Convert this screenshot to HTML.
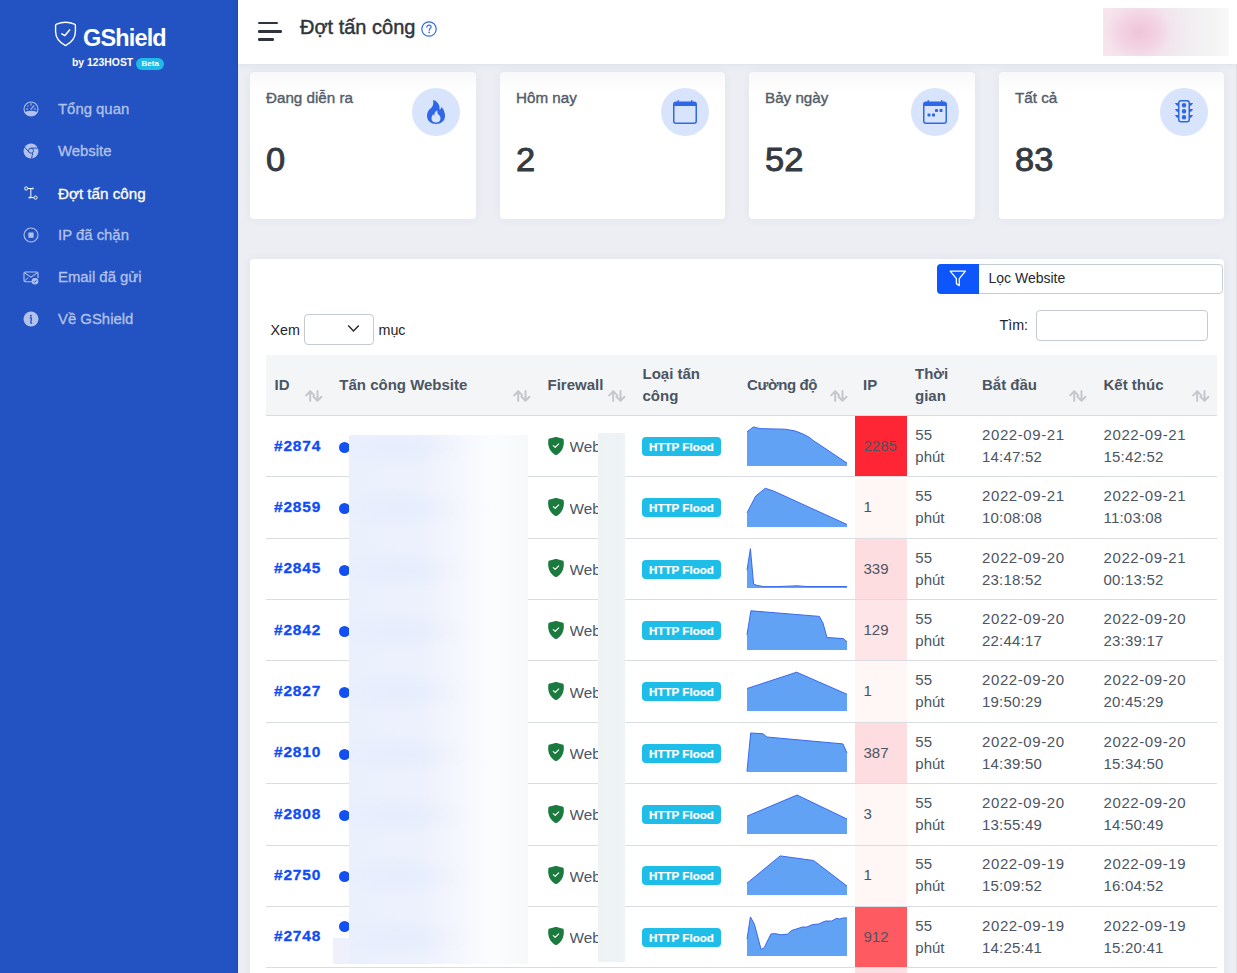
<!DOCTYPE html>
<html><head><meta charset="utf-8"><title>GShield</title>
<style>
html,body{margin:0;padding:0}
body{width:1237px;height:973px;overflow:hidden;position:relative;background:#eceef4;font-family:"Liberation Sans", sans-serif;}
.t{position:absolute;white-space:nowrap;}
#sb{position:absolute;left:0;top:0;width:238px;height:973px;background:#2352c2;box-shadow:inset -1px 0 0 #1a49bd;}
#hd{position:absolute;left:238px;top:0;width:999px;height:64px;background:#fff;box-shadow:0 1px 6px rgba(40,50,80,0.07);z-index:2}
.card{position:absolute;background:#fff;border-radius:4px;box-shadow:0 0 10px rgba(60,70,110,0.06);}
.circ{position:absolute;width:48px;height:48px;border-radius:50%;background:#d8e4fb;}
.badge{position:absolute;width:79px;height:19px;border-radius:4px;background:#1fbee9;color:#fff;font-weight:700;font-size:11.6px;line-height:20.6px;text-align:center;letter-spacing:0px;-webkit-text-stroke:0.2px #fff;}
</style></head><body>
<div id="sb">
<svg style="position:absolute;left:54px;top:21px" width="23" height="26" viewBox="0 0 23 26">
<path d="M11.5 1.3 C8.2 1.3 5 2.1 2.6 3.1 C1.9 3.4 1.6 3.9 1.6 4.6 V10.6 C1.6 16.6 5.6 21.6 11.5 24.6 C17.4 21.6 21.4 16.6 21.4 10.6 V4.6 C21.4 3.9 21.1 3.4 20.4 3.1 C18 2.1 14.8 1.3 11.5 1.3 Z" fill="none" stroke="#fff" stroke-width="1.4" stroke-linejoin="round"/>
<path d="M7.9 12.8 L10.9 14.6 L15.6 8.9" fill="none" stroke="#fff" stroke-width="1.5" stroke-linecap="round" stroke-linejoin="round"/>
</svg>
<div class="t " style="left:83.00px;top:22.58px;font-size:23.5px;line-height:30.55px;color:#fff;font-weight:700;letter-spacing:-0.85px;">GShield</div>
<div class="t " style="left:72.00px;top:55.63px;font-size:10.4px;line-height:13.52px;color:#fff;font-weight:700;">by 123HOST</div>
<div style="position:absolute;left:136px;top:58px;width:28px;height:12px;border-radius:6px;background:#1fbbe6"></div>
<div class="t " style="left:141.50px;top:59.03px;font-size:8px;line-height:10.4px;color:#fff;font-weight:700;">Beta</div>
<div style="position:absolute;left:23.1px;top:101.2px;width:17px;height:16px"><svg width="16" height="16" viewBox="0 0 16 16"><circle cx="8" cy="8" r="7" fill="none" stroke="#b3c2ea" stroke-width="1.1"/><path d="M1.5 11.2 Q8 8.4 14.5 11.2 A7.5 7.5 0 0 1 1.5 11.2 Z" fill="#b3c2ea"/><path d="M8 8.1 L10.9 4.8" stroke="#b3c2ea" stroke-width="1.2" stroke-linecap="round"/><path d="M8 2.6 V4.1 M3.4 8 H4.7 M11.3 8 H12.6" stroke="#b3c2ea" stroke-width="1.1" stroke-linecap="round"/><circle cx="4.9" cy="5" r=".65" fill="#b3c2ea"/></svg></div>
<div class="t " style="left:58.00px;top:100.45px;font-size:14.9px;line-height:19.37px;color:#b3c2ea;-webkit-text-stroke:0.3px #b3c2ea;">Tổng quan</div>
<div style="position:absolute;left:23.1px;top:143.2px;width:17px;height:16px"><svg width="16" height="16" viewBox="0 0 16 16"><circle cx="8" cy="8" r="7.5" fill="#b3c2ea"/><circle cx="8" cy="7.7" r="2.5" fill="none" stroke="#2352c2" stroke-width="1"/><path d="M1 3.6 L5.8 8.8 M8 5.1 L15.6 5.1 M9.6 10 L8.6 15.8" stroke="#2352c2" stroke-width="1"/></svg></div>
<div class="t " style="left:58.00px;top:142.45px;font-size:14.9px;line-height:19.37px;color:#b3c2ea;-webkit-text-stroke:0.3px #b3c2ea;">Website</div>
<div style="position:absolute;left:23.1px;top:185.2px;width:17px;height:16px"><svg width="16" height="16" viewBox="0 0 16 16"><circle cx="3.2" cy="3.5" r="1.6" fill="none" stroke="#fff" stroke-width="1"/><circle cx="12.5" cy="12.6" r="1.6" fill="none" stroke="#fff" stroke-width="1"/><path d="M4.8 3.5 H10.3 M7.85 3.5 V12.6 M5.9 12.6 H10.9" fill="none" stroke="#fff" stroke-width="1"/><rect x="9" y="2.7" width="1.5" height="1.6" fill="#fff"/><rect x="5.7" y="11.8" width="1.5" height="1.6" fill="#fff"/></svg></div>
<div class="t " style="left:58.00px;top:184.15px;font-size:15.2px;line-height:19.76px;color:#ffffff;-webkit-text-stroke:0.3px #ffffff;">Đợt tấn công</div>
<div style="position:absolute;left:23.1px;top:227.2px;width:17px;height:16px"><svg width="16" height="16" viewBox="0 0 16 16"><circle cx="8" cy="8" r="7" fill="none" stroke="#b3c2ea" stroke-width="1.1"/><rect x="5.4" y="5.6" width="5.2" height="5.2" rx=".5" fill="#b3c2ea"/></svg></div>
<div class="t " style="left:58.00px;top:226.45px;font-size:14.9px;line-height:19.37px;color:#b3c2ea;-webkit-text-stroke:0.3px #b3c2ea;">IP đã chặn</div>
<div style="position:absolute;left:23.1px;top:269.2px;width:17px;height:16px"><svg width="16" height="16" viewBox="0 0 16 16"><path d="M15 9.2 V4.2 C15 3.5 14.5 3 13.8 3 H2.2 C1.5 3 1 3.5 1 4.2 V11.6 C1 12.3 1.5 12.8 2.2 12.8 H9.6" fill="none" stroke="#b3c2ea" stroke-width="1.1"/><path d="M1.4 3.6 L7.9 8.2 L14.6 3.6" fill="none" stroke="#b3c2ea" stroke-width="1.1"/><path d="M1.4 12 L5.2 8.6" fill="none" stroke="#b3c2ea" stroke-width="1"/><circle cx="12" cy="12.3" r="3.3" fill="#b3c2ea"/><path d="M10.6 12.4 L11.6 13.3 L13.4 11.4" fill="none" stroke="#2352c2" stroke-width="1"/></svg></div>
<div class="t " style="left:58.00px;top:268.45px;font-size:14.9px;line-height:19.37px;color:#b3c2ea;-webkit-text-stroke:0.3px #b3c2ea;">Email đã gửi</div>
<div style="position:absolute;left:23.1px;top:310.7px;width:17px;height:16px"><svg width="16" height="16" viewBox="0 0 16 16"><circle cx="8" cy="8" r="7.5" fill="#b3c2ea"/><circle cx="7.9" cy="4.8" r=".95" fill="#2352c2"/><path d="M7.2 6.9 H8.5 L7.8 11.4 C7.7 12 8 12.3 8.7 12.2" fill="none" stroke="#2352c2" stroke-width="1.3" stroke-linecap="round" stroke-linejoin="round"/></svg></div>
<div class="t " style="left:58.00px;top:310.45px;font-size:14.9px;line-height:19.37px;color:#b3c2ea;-webkit-text-stroke:0.3px #b3c2ea;">Về GShield</div>
</div>
<div id="hd">
<div style="position:absolute;left:20px;top:21.8px;width:20px;height:2.6px;border-radius:1.3px;background:#2e343c"></div>
<div style="position:absolute;left:20px;top:30.4px;width:24px;height:2.6px;border-radius:1.3px;background:#2e343c"></div>
<div style="position:absolute;left:20px;top:38.4px;width:16px;height:2.6px;border-radius:1.3px;background:#2e343c"></div>
<div class="t " style="left:62.00px;top:13.87px;font-size:20px;line-height:26.0px;color:#2f353d;-webkit-text-stroke:0.45px #2f353d;">Đợt tấn công</div>
<svg style="position:absolute;left:182.5px;top:20.5px" width="16" height="16" viewBox="0 0 16 16"><circle cx="8" cy="8" r="7.2" fill="none" stroke="#2f6ae8" stroke-width="1.2"/><path d="M5.9 6.1 C5.9 4.9 6.8 4.1 8 4.1 C9.2 4.1 10.1 4.9 10.1 6 C10.1 7.4 8.2 7.6 8.2 9.2" fill="none" stroke="#2f6ae8" stroke-width="1.2" stroke-linecap="round"/><circle cx="8.2" cy="11.4" r=".8" fill="#2f6ae8"/></svg>
<div style="position:absolute;left:865px;top:8px;width:126px;height:48px;background:radial-gradient(ellipse 52px 44px at 36px 24px,rgba(240,196,218,1) 0%,rgba(242,205,224,0.9) 30%,rgba(243,225,235,0.5) 65%,rgba(243,240,243,0) 100%),linear-gradient(90deg,#f9e6ef 0%,#f2e4ec 40%,#f1eef1 65%,#f3f3f4 85%,#f9f9fa 100%)"></div>
</div>
<div class="card" style="left:250px;top:72px;width:226px;height:147px;background:linear-gradient(#f9f9fb 0px,#fcfcfd 10px,#fff 22px)"></div>
<div class="t " style="left:266.00px;top:88.05px;font-size:15.2px;line-height:19.76px;color:#555e69;-webkit-text-stroke:0.4px #555e69;">Đang diễn ra</div>
<div class="circ" style="left:412.0px;top:88px"></div>
<div style="position:absolute;left:424.0px;top:100px;width:24px;height:24px"><svg width="24" height="24" viewBox="0 0 16 16"><path d="M8 16c3.314 0 6-2 6-5.5 0-1.5-.5-4-2.5-6 .25 1.5-1.25 2-1.25 2C11 4 9 .5 6 0c.357 2 .5 4-2 6-1.25 1-2 2.729-2 4.5C2 14 4.686 16 8 16m0-1c-1.657 0-3-1-3-2.75 0-.75.25-2 1.25-3C6.125 10 7 10.5 7 10.5c-.375-1.25.5-3.25 2-3.5-.179 1-.25 2 1 3 .625.5 1 1.364 1 2.25C11 14 9.657 15 8 15" fill="#2f67e6"/></svg></div>
<div class="t " style="left:266.00px;top:138.91px;font-size:32.5px;line-height:42.25px;color:#343a42;-webkit-text-stroke:0.9px #343a42;transform:scaleX(1.06);transform-origin:0 0;">0</div>
<div class="card" style="left:500px;top:72px;width:225px;height:147px;background:linear-gradient(#f9f9fb 0px,#fcfcfd 10px,#fff 22px)"></div>
<div class="t " style="left:516.00px;top:88.05px;font-size:15.2px;line-height:19.76px;color:#555e69;-webkit-text-stroke:0.4px #555e69;">Hôm nay</div>
<div class="circ" style="left:661.0px;top:88px"></div>
<div style="position:absolute;left:673.0px;top:100px;width:24px;height:24px"><svg width="24" height="24" viewBox="0 0 16 16"><path d="M3.5 0a.5.5 0 0 1 .5.5V1h8V.5a.5.5 0 0 1 1 0V1h1a2 2 0 0 1 2 2v11a2 2 0 0 1-2 2H2a2 2 0 0 1-2-2V3a2 2 0 0 1 2-2h1V.5a.5.5 0 0 1 .5-.5M1 4v10a1 1 0 0 0 1 1h12a1 1 0 0 0 1-1V4z" fill="#2f67e6"/></svg></div>
<div class="t " style="left:516.00px;top:138.91px;font-size:32.5px;line-height:42.25px;color:#343a42;-webkit-text-stroke:0.9px #343a42;transform:scaleX(1.06);transform-origin:0 0;">2</div>
<div class="card" style="left:749px;top:72px;width:226px;height:147px;background:linear-gradient(#f9f9fb 0px,#fcfcfd 10px,#fff 22px)"></div>
<div class="t " style="left:765.00px;top:88.05px;font-size:15.2px;line-height:19.76px;color:#555e69;-webkit-text-stroke:0.4px #555e69;">Bảy ngày</div>
<div class="circ" style="left:911.0px;top:88px"></div>
<div style="position:absolute;left:923.0px;top:100px;width:24px;height:24px"><svg width="24" height="24" viewBox="0 0 16 16"><path d="M3.5 0a.5.5 0 0 1 .5.5V1h8V.5a.5.5 0 0 1 1 0V1h1a2 2 0 0 1 2 2v11a2 2 0 0 1-2 2H2a2 2 0 0 1-2-2V3a2 2 0 0 1 2-2h1V.5a.5.5 0 0 1 .5-.5M1 4v10a1 1 0 0 0 1 1h12a1 1 0 0 0 1-1V4z" fill="#2f67e6"/><path d="M11 6.5a.5.5 0 0 1 .5-.5h1a.5.5 0 0 1 .5.5v1a.5.5 0 0 1-.5.5h-1a.5.5 0 0 1-.5-.5zm-3 0a.5.5 0 0 1 .5-.5h1a.5.5 0 0 1 .5.5v1a.5.5 0 0 1-.5.5h-1a.5.5 0 0 1-.5-.5zm-5 3a.5.5 0 0 1 .5-.5h1a.5.5 0 0 1 .5.5v1a.5.5 0 0 1-.5.5h-1a.5.5 0 0 1-.5-.5zm3 0a.5.5 0 0 1 .5-.5h1a.5.5 0 0 1 .5.5v1a.5.5 0 0 1-.5.5h-1a.5.5 0 0 1-.5-.5z" fill="#2f67e6"/></svg></div>
<div class="t " style="left:765.00px;top:138.91px;font-size:32.5px;line-height:42.25px;color:#343a42;-webkit-text-stroke:0.9px #343a42;transform:scaleX(1.06);transform-origin:0 0;">52</div>
<div class="card" style="left:999px;top:72px;width:225px;height:147px;background:linear-gradient(#f9f9fb 0px,#fcfcfd 10px,#fff 22px)"></div>
<div class="t " style="left:1015.00px;top:88.05px;font-size:15.2px;line-height:19.76px;color:#555e69;-webkit-text-stroke:0.4px #555e69;">Tất cả</div>
<div class="circ" style="left:1160.0px;top:88px"></div>
<div style="position:absolute;left:1172.0px;top:100px;width:24px;height:24px"><svg width="24" height="24" viewBox="0 0 16 16"><path d="M8 5a1.5 1.5 0 1 0 0-3 1.5 1.5 0 0 0 0 3m0 4a1.5 1.5 0 1 0 0-3 1.5 1.5 0 0 0 0 3m1.5 2.5a1.5 1.5 0 1 1-3 0 1.5 1.5 0 0 1 3 0" fill="#2f67e6"/><path d="M4 2a2 2 0 0 1 2-2h4a2 2 0 0 1 2 2h2c-.167.5-.8 1.6-2 2v2h2c-.167.5-.8 1.6-2 2v2h2c-.167.5-.8 1.6-2 2v1a2 2 0 0 1-2 2H6a2 2 0 0 1-2-2v-1c-1.2-.4-1.833-1.5-2-2h2V8c-1.2-.4-1.833-1.5-2-2h2V4c-1.2-.4-1.833-1.5-2-2zm2-1a1 1 0 0 0-1 1v11a1 1 0 0 0 1 1h4a1 1 0 0 0 1-1V2a1 1 0 0 0-1-1z" fill="#2f67e6"/></svg></div>
<div class="t " style="left:1015.00px;top:138.91px;font-size:32.5px;line-height:42.25px;color:#343a42;-webkit-text-stroke:0.9px #343a42;transform:scaleX(1.06);transform-origin:0 0;">83</div>
<div class="card" style="left:250px;top:259px;width:974px;height:760px"></div>
<div style="position:absolute;left:936.5px;top:263.5px;width:286.5px;height:30px;border:1px solid #c6ccd4;border-radius:4px;background:#fff;box-sizing:border-box"></div>
<div style="position:absolute;left:936.5px;top:263.5px;width:42.5px;height:30px;border-radius:4px 0 0 4px;background:#0d55fd"></div>
<svg style="position:absolute;left:949px;top:270px" width="18" height="17" viewBox="0 0 18 17"><path d="M1.2 1.2 H16.4 L10.3 8.6 V15.6 L7.4 13.6 V8.6 Z" fill="none" stroke="#fff" stroke-width="1.3" stroke-linejoin="round"/></svg>
<div class="t " style="left:988.50px;top:268.85px;font-size:14px;line-height:18.2px;color:#24292f;">Lọc Website</div>
<div class="t " style="left:270.50px;top:320.95px;font-size:14.3px;line-height:18.59px;color:#1f2328;">Xem</div>
<div style="position:absolute;left:304px;top:314px;width:70px;height:31px;border:1px solid #c4cbd4;border-radius:4px;box-sizing:border-box;background:#fff"></div>
<svg style="position:absolute;left:346.5px;top:324.4px" width="13" height="9" viewBox="0 0 13 9"><path d="M1.2 1.5 L6.5 6.9 L11.8 1.5" fill="none" stroke="#24292f" stroke-width="1.4"/></svg>
<div class="t " style="left:378.50px;top:320.95px;font-size:14.3px;line-height:18.59px;color:#1f2328;">mục</div>
<div class="t " style="left:999.50px;top:316.45px;font-size:14.3px;line-height:18.59px;color:#1f2328;">Tìm:</div>
<div style="position:absolute;left:1036px;top:310px;width:172px;height:31px;border:1px solid #c4cbd4;border-radius:4px;box-sizing:border-box;background:#fff"></div>
<div style="position:absolute;left:266px;top:355px;width:951px;height:60px;background:#f4f5f7"></div>
<div style="position:absolute;left:266px;top:415px;width:951px;height:1px;background:#d9dde2"></div>
<div style="position:absolute;left:266px;top:476px;width:951px;height:1px;background:#d9dde2"></div>
<div style="position:absolute;left:266px;top:538px;width:951px;height:1px;background:#d9dde2"></div>
<div style="position:absolute;left:266px;top:599px;width:951px;height:1px;background:#d9dde2"></div>
<div style="position:absolute;left:266px;top:660px;width:951px;height:1px;background:#d9dde2"></div>
<div style="position:absolute;left:266px;top:722px;width:951px;height:1px;background:#d9dde2"></div>
<div style="position:absolute;left:266px;top:783px;width:951px;height:1px;background:#d9dde2"></div>
<div style="position:absolute;left:266px;top:845px;width:951px;height:1px;background:#d9dde2"></div>
<div style="position:absolute;left:266px;top:906px;width:951px;height:1px;background:#d9dde2"></div>
<div style="position:absolute;left:266px;top:967px;width:951px;height:1px;background:#d9dde2"></div>
<div class="t " style="left:274.50px;top:375.05px;font-size:15px;line-height:19.5px;color:#4b5563;font-weight:700;">ID</div>
<svg style="position:absolute;left:305px;top:389.5px" width="18" height="12" viewBox="0 0 18 12"><path d="M5.2 10.9 V1.3 M1.2 5.4 L5.2 1.2 L9.2 5.4 M12.5 1.1 V10.7 M8.5 6.7 L12.5 10.8 L16.5 6.7" fill="none" stroke="#c4c8cc" stroke-width="2" stroke-linecap="round" stroke-linejoin="round"/></svg>
<div class="t " style="left:339.30px;top:375.05px;font-size:15px;line-height:19.5px;color:#4b5563;font-weight:700;">Tấn công Website</div>
<svg style="position:absolute;left:513px;top:389.5px" width="18" height="12" viewBox="0 0 18 12"><path d="M5.2 10.9 V1.3 M1.2 5.4 L5.2 1.2 L9.2 5.4 M12.5 1.1 V10.7 M8.5 6.7 L12.5 10.8 L16.5 6.7" fill="none" stroke="#c4c8cc" stroke-width="2" stroke-linecap="round" stroke-linejoin="round"/></svg>
<div class="t " style="left:547.50px;top:375.05px;font-size:15px;line-height:19.5px;color:#4b5563;font-weight:700;">Firewall</div>
<svg style="position:absolute;left:608px;top:389.5px" width="18" height="12" viewBox="0 0 18 12"><path d="M5.2 10.9 V1.3 M1.2 5.4 L5.2 1.2 L9.2 5.4 M12.5 1.1 V10.7 M8.5 6.7 L12.5 10.8 L16.5 6.7" fill="none" stroke="#c4c8cc" stroke-width="2" stroke-linecap="round" stroke-linejoin="round"/></svg>
<div class="t " style="left:642.50px;top:364.25px;font-size:15px;line-height:19.5px;color:#4b5563;font-weight:700;">Loại tấn</div>
<div class="t " style="left:642.50px;top:386.25px;font-size:15px;line-height:19.5px;color:#4b5563;font-weight:700;">công</div>
<div class="t " style="left:747.00px;top:375.05px;font-size:15px;line-height:19.5px;color:#4b5563;font-weight:700;letter-spacing:-0.4px;">Cường độ</div>
<svg style="position:absolute;left:829.5px;top:389.5px" width="18" height="12" viewBox="0 0 18 12"><path d="M5.2 10.9 V1.3 M1.2 5.4 L5.2 1.2 L9.2 5.4 M12.5 1.1 V10.7 M8.5 6.7 L12.5 10.8 L16.5 6.7" fill="none" stroke="#c4c8cc" stroke-width="2" stroke-linecap="round" stroke-linejoin="round"/></svg>
<div class="t " style="left:863.00px;top:375.05px;font-size:15px;line-height:19.5px;color:#4b5563;font-weight:700;">IP</div>
<div class="t " style="left:915.00px;top:364.25px;font-size:15px;line-height:19.5px;color:#4b5563;font-weight:700;">Thời</div>
<div class="t " style="left:915.00px;top:386.25px;font-size:15px;line-height:19.5px;color:#4b5563;font-weight:700;">gian</div>
<div class="t " style="left:982.00px;top:375.05px;font-size:15px;line-height:19.5px;color:#4b5563;font-weight:700;">Bắt đầu</div>
<svg style="position:absolute;left:1069px;top:389.5px" width="18" height="12" viewBox="0 0 18 12"><path d="M5.2 10.9 V1.3 M1.2 5.4 L5.2 1.2 L9.2 5.4 M12.5 1.1 V10.7 M8.5 6.7 L12.5 10.8 L16.5 6.7" fill="none" stroke="#c4c8cc" stroke-width="2" stroke-linecap="round" stroke-linejoin="round"/></svg>
<div class="t " style="left:1103.50px;top:375.05px;font-size:15px;line-height:19.5px;color:#4b5563;font-weight:700;">Kết thúc</div>
<svg style="position:absolute;left:1191.5px;top:389.5px" width="18" height="12" viewBox="0 0 18 12"><path d="M5.2 10.9 V1.3 M1.2 5.4 L5.2 1.2 L9.2 5.4 M12.5 1.1 V10.7 M8.5 6.7 L12.5 10.8 L16.5 6.7" fill="none" stroke="#c4c8cc" stroke-width="2" stroke-linecap="round" stroke-linejoin="round"/></svg>
<div style="position:absolute;left:855px;top:416px;width:52px;height:60px;background:#fe2634"></div>
<div class="t " style="left:274.00px;top:435.55px;font-size:15.5px;line-height:20.15px;color:#0f4cf6;font-weight:700;letter-spacing:0.8px;-webkit-text-stroke:0.3px #0f4cf6;">#2874</div>
<div style="position:absolute;left:338.5px;top:441.9px;width:11px;height:11px;border-radius:50%;background:#1250f2"></div>
<svg style="position:absolute;left:547.2px;top:436.80px" width="18" height="18" viewBox="0 0 16 16"><path d="M8 0c-.69 0-1.843.265-2.928.56-1.11.3-2.229.655-2.887.87a1.54 1.54 0 0 0-1.044 1.262c-.596 4.477.787 7.795 2.465 9.99a11.8 11.8 0 0 0 2.517 2.453c.386.273.744.482 1.048.625.28.132.581.24.829.24s.548-.108.829-.24a7 7 0 0 0 1.048-.625 11.8 11.8 0 0 0 2.517-2.453c1.678-2.195 3.061-5.513 2.465-9.990a1.54 1.54 0 0 0-1.044-1.263 63 63 0 0 0-2.887-.87C9.843.266 8.69 0 8 0" fill="#1b7a3e"/><path d="M5.6 7.6 L7.3 9.2 L10.4 6.1" fill="none" stroke="#fff" stroke-width="1" stroke-linecap="round" stroke-linejoin="round"/></svg>
<div class="t " style="left:569.50px;top:437.25px;font-size:15.3px;line-height:19.89px;color:#4b5563;clip-path:inset(0 0 0 0);width:28.5px;overflow:hidden;white-space:nowrap;">Web</div>
<div class="badge" style="left:642px;top:437.10px">HTTP Flood</div>
<svg style="position:absolute;left:747px;top:425.70px;overflow:visible" width="100" height="40" viewBox="0 0 100 40"><polygon points="0,40 0,5.9 6.4,0.9 12.8,2.6 25,2.9 37.7,3.2 44,4.2 48.4,5.1 53,6.8 57.2,8.6 62,11.2 66.1,14.4 100,37.1 100,40" fill="#62a2f5"/><polyline points="0,5.9 6.4,0.9 12.8,2.6 25,2.9 37.7,3.2 44,4.2 48.4,5.1 53,6.8 57.2,8.6 62,11.2 66.1,14.4 100,37.1" fill="none" stroke="#3a68ee" stroke-width="1" stroke-linejoin="round"/></svg>
<div class="t " style="left:863.50px;top:436.05px;font-size:15px;line-height:19.5px;color:#4b5563;">2285</div>
<div class="t " style="left:915.30px;top:424.95px;font-size:15px;line-height:19.5px;color:#4b5563;">55</div>
<div class="t " style="left:915.30px;top:447.05px;font-size:15px;line-height:19.5px;color:#4b5563;">phút</div>
<div class="t " style="left:982.00px;top:424.95px;font-size:15px;line-height:19.5px;color:#4b5563;letter-spacing:0.6px;">2022-09-21</div>
<div class="t " style="left:982.00px;top:447.05px;font-size:15px;line-height:19.5px;color:#4b5563;letter-spacing:0.2px;">14:47:52</div>
<div class="t " style="left:1103.50px;top:424.95px;font-size:15px;line-height:19.5px;color:#4b5563;letter-spacing:0.6px;">2022-09-21</div>
<div class="t " style="left:1103.50px;top:447.05px;font-size:15px;line-height:19.5px;color:#4b5563;letter-spacing:0.2px;">15:42:52</div>
<div style="position:absolute;left:855px;top:477px;width:52px;height:61px;background:#fff6f6"></div>
<div class="t " style="left:274.00px;top:496.88px;font-size:15.5px;line-height:20.15px;color:#0f4cf6;font-weight:700;letter-spacing:0.8px;-webkit-text-stroke:0.3px #0f4cf6;">#2859</div>
<div style="position:absolute;left:338.5px;top:503.2px;width:11px;height:11px;border-radius:50%;background:#1250f2"></div>
<svg style="position:absolute;left:547.2px;top:498.13px" width="18" height="18" viewBox="0 0 16 16"><path d="M8 0c-.69 0-1.843.265-2.928.56-1.11.3-2.229.655-2.887.87a1.54 1.54 0 0 0-1.044 1.262c-.596 4.477.787 7.795 2.465 9.99a11.8 11.8 0 0 0 2.517 2.453c.386.273.744.482 1.048.625.28.132.581.24.829.24s.548-.108.829-.24a7 7 0 0 0 1.048-.625 11.8 11.8 0 0 0 2.517-2.453c1.678-2.195 3.061-5.513 2.465-9.990a1.54 1.54 0 0 0-1.044-1.263 63 63 0 0 0-2.887-.87C9.843.266 8.69 0 8 0" fill="#1b7a3e"/><path d="M5.6 7.6 L7.3 9.2 L10.4 6.1" fill="none" stroke="#fff" stroke-width="1" stroke-linecap="round" stroke-linejoin="round"/></svg>
<div class="t " style="left:569.50px;top:498.58px;font-size:15.3px;line-height:19.89px;color:#4b5563;clip-path:inset(0 0 0 0);width:28.5px;overflow:hidden;white-space:nowrap;">Web</div>
<div class="badge" style="left:642px;top:498.43px">HTTP Flood</div>
<svg style="position:absolute;left:747px;top:487.03px;overflow:visible" width="100" height="40" viewBox="0 0 100 40"><polygon points="0,40 0,25.8 8.8,8.9 18.3,1.3 26.6,4 100,37.5 100,40" fill="#62a2f5"/><polyline points="0,25.8 8.8,8.9 18.3,1.3 26.6,4 100,37.5" fill="none" stroke="#3a68ee" stroke-width="1" stroke-linejoin="round"/></svg>
<div class="t " style="left:863.50px;top:497.38px;font-size:15px;line-height:19.5px;color:#4b5563;">1</div>
<div class="t " style="left:915.30px;top:486.28px;font-size:15px;line-height:19.5px;color:#4b5563;">55</div>
<div class="t " style="left:915.30px;top:508.38px;font-size:15px;line-height:19.5px;color:#4b5563;">phút</div>
<div class="t " style="left:982.00px;top:486.28px;font-size:15px;line-height:19.5px;color:#4b5563;letter-spacing:0.6px;">2022-09-21</div>
<div class="t " style="left:982.00px;top:508.38px;font-size:15px;line-height:19.5px;color:#4b5563;letter-spacing:0.2px;">10:08:08</div>
<div class="t " style="left:1103.50px;top:486.28px;font-size:15px;line-height:19.5px;color:#4b5563;letter-spacing:0.6px;">2022-09-21</div>
<div class="t " style="left:1103.50px;top:508.38px;font-size:15px;line-height:19.5px;color:#4b5563;letter-spacing:0.2px;">11:03:08</div>
<div style="position:absolute;left:855px;top:539px;width:52px;height:60px;background:#fddde0"></div>
<div class="t " style="left:274.00px;top:558.21px;font-size:15.5px;line-height:20.15px;color:#0f4cf6;font-weight:700;letter-spacing:0.8px;-webkit-text-stroke:0.3px #0f4cf6;">#2845</div>
<div style="position:absolute;left:338.5px;top:564.6px;width:11px;height:11px;border-radius:50%;background:#1250f2"></div>
<svg style="position:absolute;left:547.2px;top:559.46px" width="18" height="18" viewBox="0 0 16 16"><path d="M8 0c-.69 0-1.843.265-2.928.56-1.11.3-2.229.655-2.887.87a1.54 1.54 0 0 0-1.044 1.262c-.596 4.477.787 7.795 2.465 9.99a11.8 11.8 0 0 0 2.517 2.453c.386.273.744.482 1.048.625.28.132.581.24.829.24s.548-.108.829-.24a7 7 0 0 0 1.048-.625 11.8 11.8 0 0 0 2.517-2.453c1.678-2.195 3.061-5.513 2.465-9.990a1.54 1.54 0 0 0-1.044-1.263 63 63 0 0 0-2.887-.87C9.843.266 8.69 0 8 0" fill="#1b7a3e"/><path d="M5.6 7.6 L7.3 9.2 L10.4 6.1" fill="none" stroke="#fff" stroke-width="1" stroke-linecap="round" stroke-linejoin="round"/></svg>
<div class="t " style="left:569.50px;top:559.91px;font-size:15.3px;line-height:19.89px;color:#4b5563;clip-path:inset(0 0 0 0);width:28.5px;overflow:hidden;white-space:nowrap;">Web</div>
<div class="badge" style="left:642px;top:559.76px">HTTP Flood</div>
<svg style="position:absolute;left:747px;top:548.36px;overflow:visible" width="100" height="40" viewBox="0 0 100 40"><polygon points="0,40 0,22.2 3.4,0.7 6.6,36 10,37.4 17,38.6 30,38.6 40,38.2 50,37.8 60,38.5 100,38.5 100,40" fill="#62a2f5"/><polyline points="0,22.2 3.4,0.7 6.6,36 10,37.4 17,38.6 30,38.6 40,38.2 50,37.8 60,38.5 100,38.5" fill="none" stroke="#3a68ee" stroke-width="1" stroke-linejoin="round"/></svg>
<div class="t " style="left:863.50px;top:558.71px;font-size:15px;line-height:19.5px;color:#4b5563;">339</div>
<div class="t " style="left:915.30px;top:547.61px;font-size:15px;line-height:19.5px;color:#4b5563;">55</div>
<div class="t " style="left:915.30px;top:569.71px;font-size:15px;line-height:19.5px;color:#4b5563;">phút</div>
<div class="t " style="left:982.00px;top:547.61px;font-size:15px;line-height:19.5px;color:#4b5563;letter-spacing:0.6px;">2022-09-20</div>
<div class="t " style="left:982.00px;top:569.71px;font-size:15px;line-height:19.5px;color:#4b5563;letter-spacing:0.2px;">23:18:52</div>
<div class="t " style="left:1103.50px;top:547.61px;font-size:15px;line-height:19.5px;color:#4b5563;letter-spacing:0.6px;">2022-09-21</div>
<div class="t " style="left:1103.50px;top:569.71px;font-size:15px;line-height:19.5px;color:#4b5563;letter-spacing:0.2px;">00:13:52</div>
<div style="position:absolute;left:855px;top:600px;width:52px;height:60px;background:#fee6e8"></div>
<div class="t " style="left:274.00px;top:619.54px;font-size:15.5px;line-height:20.15px;color:#0f4cf6;font-weight:700;letter-spacing:0.8px;-webkit-text-stroke:0.3px #0f4cf6;">#2842</div>
<div style="position:absolute;left:338.5px;top:625.9px;width:11px;height:11px;border-radius:50%;background:#1250f2"></div>
<svg style="position:absolute;left:547.2px;top:620.79px" width="18" height="18" viewBox="0 0 16 16"><path d="M8 0c-.69 0-1.843.265-2.928.56-1.11.3-2.229.655-2.887.87a1.54 1.54 0 0 0-1.044 1.262c-.596 4.477.787 7.795 2.465 9.99a11.8 11.8 0 0 0 2.517 2.453c.386.273.744.482 1.048.625.28.132.581.24.829.24s.548-.108.829-.24a7 7 0 0 0 1.048-.625 11.8 11.8 0 0 0 2.517-2.453c1.678-2.195 3.061-5.513 2.465-9.990a1.54 1.54 0 0 0-1.044-1.263 63 63 0 0 0-2.887-.87C9.843.266 8.69 0 8 0" fill="#1b7a3e"/><path d="M5.6 7.6 L7.3 9.2 L10.4 6.1" fill="none" stroke="#fff" stroke-width="1" stroke-linecap="round" stroke-linejoin="round"/></svg>
<div class="t " style="left:569.50px;top:621.24px;font-size:15.3px;line-height:19.89px;color:#4b5563;clip-path:inset(0 0 0 0);width:28.5px;overflow:hidden;white-space:nowrap;">Web</div>
<div class="badge" style="left:642px;top:621.09px">HTTP Flood</div>
<svg style="position:absolute;left:747px;top:609.69px;overflow:visible" width="100" height="40" viewBox="0 0 100 40"><polygon points="0,40 0,24.8 3.9,0.8 72.4,6.4 76.1,13.3 79.9,27.5 96.4,28.6 100,32 100,40" fill="#62a2f5"/><polyline points="0,24.8 3.9,0.8 72.4,6.4 76.1,13.3 79.9,27.5 96.4,28.6 100,32" fill="none" stroke="#3a68ee" stroke-width="1" stroke-linejoin="round"/></svg>
<div class="t " style="left:863.50px;top:620.04px;font-size:15px;line-height:19.5px;color:#4b5563;">129</div>
<div class="t " style="left:915.30px;top:608.94px;font-size:15px;line-height:19.5px;color:#4b5563;">55</div>
<div class="t " style="left:915.30px;top:631.04px;font-size:15px;line-height:19.5px;color:#4b5563;">phút</div>
<div class="t " style="left:982.00px;top:608.94px;font-size:15px;line-height:19.5px;color:#4b5563;letter-spacing:0.6px;">2022-09-20</div>
<div class="t " style="left:982.00px;top:631.04px;font-size:15px;line-height:19.5px;color:#4b5563;letter-spacing:0.2px;">22:44:17</div>
<div class="t " style="left:1103.50px;top:608.94px;font-size:15px;line-height:19.5px;color:#4b5563;letter-spacing:0.6px;">2022-09-20</div>
<div class="t " style="left:1103.50px;top:631.04px;font-size:15px;line-height:19.5px;color:#4b5563;letter-spacing:0.2px;">23:39:17</div>
<div style="position:absolute;left:855px;top:661px;width:52px;height:61px;background:#fff6f6"></div>
<div class="t " style="left:274.00px;top:680.87px;font-size:15.5px;line-height:20.15px;color:#0f4cf6;font-weight:700;letter-spacing:0.8px;-webkit-text-stroke:0.3px #0f4cf6;">#2827</div>
<div style="position:absolute;left:338.5px;top:687.2px;width:11px;height:11px;border-radius:50%;background:#1250f2"></div>
<svg style="position:absolute;left:547.2px;top:682.12px" width="18" height="18" viewBox="0 0 16 16"><path d="M8 0c-.69 0-1.843.265-2.928.56-1.11.3-2.229.655-2.887.87a1.54 1.54 0 0 0-1.044 1.262c-.596 4.477.787 7.795 2.465 9.99a11.8 11.8 0 0 0 2.517 2.453c.386.273.744.482 1.048.625.28.132.581.24.829.24s.548-.108.829-.24a7 7 0 0 0 1.048-.625 11.8 11.8 0 0 0 2.517-2.453c1.678-2.195 3.061-5.513 2.465-9.990a1.54 1.54 0 0 0-1.044-1.263 63 63 0 0 0-2.887-.87C9.843.266 8.69 0 8 0" fill="#1b7a3e"/><path d="M5.6 7.6 L7.3 9.2 L10.4 6.1" fill="none" stroke="#fff" stroke-width="1" stroke-linecap="round" stroke-linejoin="round"/></svg>
<div class="t " style="left:569.50px;top:682.57px;font-size:15.3px;line-height:19.89px;color:#4b5563;clip-path:inset(0 0 0 0);width:28.5px;overflow:hidden;white-space:nowrap;">Web</div>
<div class="badge" style="left:642px;top:682.42px">HTTP Flood</div>
<svg style="position:absolute;left:747px;top:671.02px;overflow:visible" width="100" height="40" viewBox="0 0 100 40"><polygon points="0,40 0,17.5 49.7,1.2 100,23.3 100,40" fill="#62a2f5"/><polyline points="0,17.5 49.7,1.2 100,23.3" fill="none" stroke="#3a68ee" stroke-width="1" stroke-linejoin="round"/></svg>
<div class="t " style="left:863.50px;top:681.37px;font-size:15px;line-height:19.5px;color:#4b5563;">1</div>
<div class="t " style="left:915.30px;top:670.27px;font-size:15px;line-height:19.5px;color:#4b5563;">55</div>
<div class="t " style="left:915.30px;top:692.37px;font-size:15px;line-height:19.5px;color:#4b5563;">phút</div>
<div class="t " style="left:982.00px;top:670.27px;font-size:15px;line-height:19.5px;color:#4b5563;letter-spacing:0.6px;">2022-09-20</div>
<div class="t " style="left:982.00px;top:692.37px;font-size:15px;line-height:19.5px;color:#4b5563;letter-spacing:0.2px;">19:50:29</div>
<div class="t " style="left:1103.50px;top:670.27px;font-size:15px;line-height:19.5px;color:#4b5563;letter-spacing:0.6px;">2022-09-20</div>
<div class="t " style="left:1103.50px;top:692.37px;font-size:15px;line-height:19.5px;color:#4b5563;letter-spacing:0.2px;">20:45:29</div>
<div style="position:absolute;left:855px;top:723px;width:52px;height:60px;background:#fddde0"></div>
<div class="t " style="left:274.00px;top:742.20px;font-size:15.5px;line-height:20.15px;color:#0f4cf6;font-weight:700;letter-spacing:0.8px;-webkit-text-stroke:0.3px #0f4cf6;">#2810</div>
<div style="position:absolute;left:338.5px;top:748.5px;width:11px;height:11px;border-radius:50%;background:#1250f2"></div>
<svg style="position:absolute;left:547.2px;top:743.45px" width="18" height="18" viewBox="0 0 16 16"><path d="M8 0c-.69 0-1.843.265-2.928.56-1.11.3-2.229.655-2.887.87a1.54 1.54 0 0 0-1.044 1.262c-.596 4.477.787 7.795 2.465 9.99a11.8 11.8 0 0 0 2.517 2.453c.386.273.744.482 1.048.625.28.132.581.24.829.24s.548-.108.829-.24a7 7 0 0 0 1.048-.625 11.8 11.8 0 0 0 2.517-2.453c1.678-2.195 3.061-5.513 2.465-9.990a1.54 1.54 0 0 0-1.044-1.263 63 63 0 0 0-2.887-.87C9.843.266 8.69 0 8 0" fill="#1b7a3e"/><path d="M5.6 7.6 L7.3 9.2 L10.4 6.1" fill="none" stroke="#fff" stroke-width="1" stroke-linecap="round" stroke-linejoin="round"/></svg>
<div class="t " style="left:569.50px;top:743.90px;font-size:15.3px;line-height:19.89px;color:#4b5563;clip-path:inset(0 0 0 0);width:28.5px;overflow:hidden;white-space:nowrap;">Web</div>
<div class="badge" style="left:642px;top:743.75px">HTTP Flood</div>
<svg style="position:absolute;left:747px;top:732.35px;overflow:visible" width="100" height="40" viewBox="0 0 100 40"><polygon points="0,40 0,39.3 3.7,1 15.9,1.7 19.9,5 95.9,11.9 100,21 100,40" fill="#62a2f5"/><polyline points="0,39.3 3.7,1 15.9,1.7 19.9,5 95.9,11.9 100,21" fill="none" stroke="#3a68ee" stroke-width="1" stroke-linejoin="round"/></svg>
<div class="t " style="left:863.50px;top:742.70px;font-size:15px;line-height:19.5px;color:#4b5563;">387</div>
<div class="t " style="left:915.30px;top:731.60px;font-size:15px;line-height:19.5px;color:#4b5563;">55</div>
<div class="t " style="left:915.30px;top:753.70px;font-size:15px;line-height:19.5px;color:#4b5563;">phút</div>
<div class="t " style="left:982.00px;top:731.60px;font-size:15px;line-height:19.5px;color:#4b5563;letter-spacing:0.6px;">2022-09-20</div>
<div class="t " style="left:982.00px;top:753.70px;font-size:15px;line-height:19.5px;color:#4b5563;letter-spacing:0.2px;">14:39:50</div>
<div class="t " style="left:1103.50px;top:731.60px;font-size:15px;line-height:19.5px;color:#4b5563;letter-spacing:0.6px;">2022-09-20</div>
<div class="t " style="left:1103.50px;top:753.70px;font-size:15px;line-height:19.5px;color:#4b5563;letter-spacing:0.2px;">15:34:50</div>
<div style="position:absolute;left:855px;top:784px;width:52px;height:61px;background:#fff6f6"></div>
<div class="t " style="left:274.00px;top:803.53px;font-size:15.5px;line-height:20.15px;color:#0f4cf6;font-weight:700;letter-spacing:0.8px;-webkit-text-stroke:0.3px #0f4cf6;">#2808</div>
<div style="position:absolute;left:338.5px;top:809.9px;width:11px;height:11px;border-radius:50%;background:#1250f2"></div>
<svg style="position:absolute;left:547.2px;top:804.78px" width="18" height="18" viewBox="0 0 16 16"><path d="M8 0c-.69 0-1.843.265-2.928.56-1.11.3-2.229.655-2.887.87a1.54 1.54 0 0 0-1.044 1.262c-.596 4.477.787 7.795 2.465 9.99a11.8 11.8 0 0 0 2.517 2.453c.386.273.744.482 1.048.625.28.132.581.24.829.24s.548-.108.829-.24a7 7 0 0 0 1.048-.625 11.8 11.8 0 0 0 2.517-2.453c1.678-2.195 3.061-5.513 2.465-9.990a1.54 1.54 0 0 0-1.044-1.263 63 63 0 0 0-2.887-.87C9.843.266 8.69 0 8 0" fill="#1b7a3e"/><path d="M5.6 7.6 L7.3 9.2 L10.4 6.1" fill="none" stroke="#fff" stroke-width="1" stroke-linecap="round" stroke-linejoin="round"/></svg>
<div class="t " style="left:569.50px;top:805.23px;font-size:15.3px;line-height:19.89px;color:#4b5563;clip-path:inset(0 0 0 0);width:28.5px;overflow:hidden;white-space:nowrap;">Web</div>
<div class="badge" style="left:642px;top:805.08px">HTTP Flood</div>
<svg style="position:absolute;left:747px;top:793.68px;overflow:visible" width="100" height="40" viewBox="0 0 100 40"><polygon points="0,40 0,22.2 50,1 100,25 100,40" fill="#62a2f5"/><polyline points="0,22.2 50,1 100,25" fill="none" stroke="#3a68ee" stroke-width="1" stroke-linejoin="round"/></svg>
<div class="t " style="left:863.50px;top:804.03px;font-size:15px;line-height:19.5px;color:#4b5563;">3</div>
<div class="t " style="left:915.30px;top:792.93px;font-size:15px;line-height:19.5px;color:#4b5563;">55</div>
<div class="t " style="left:915.30px;top:815.03px;font-size:15px;line-height:19.5px;color:#4b5563;">phút</div>
<div class="t " style="left:982.00px;top:792.93px;font-size:15px;line-height:19.5px;color:#4b5563;letter-spacing:0.6px;">2022-09-20</div>
<div class="t " style="left:982.00px;top:815.03px;font-size:15px;line-height:19.5px;color:#4b5563;letter-spacing:0.2px;">13:55:49</div>
<div class="t " style="left:1103.50px;top:792.93px;font-size:15px;line-height:19.5px;color:#4b5563;letter-spacing:0.6px;">2022-09-20</div>
<div class="t " style="left:1103.50px;top:815.03px;font-size:15px;line-height:19.5px;color:#4b5563;letter-spacing:0.2px;">14:50:49</div>
<div style="position:absolute;left:855px;top:846px;width:52px;height:60px;background:#fff6f6"></div>
<div class="t " style="left:274.00px;top:864.86px;font-size:15.5px;line-height:20.15px;color:#0f4cf6;font-weight:700;letter-spacing:0.8px;-webkit-text-stroke:0.3px #0f4cf6;">#2750</div>
<div style="position:absolute;left:338.5px;top:871.2px;width:11px;height:11px;border-radius:50%;background:#1250f2"></div>
<svg style="position:absolute;left:547.2px;top:866.11px" width="18" height="18" viewBox="0 0 16 16"><path d="M8 0c-.69 0-1.843.265-2.928.56-1.11.3-2.229.655-2.887.87a1.54 1.54 0 0 0-1.044 1.262c-.596 4.477.787 7.795 2.465 9.99a11.8 11.8 0 0 0 2.517 2.453c.386.273.744.482 1.048.625.28.132.581.24.829.24s.548-.108.829-.24a7 7 0 0 0 1.048-.625 11.8 11.8 0 0 0 2.517-2.453c1.678-2.195 3.061-5.513 2.465-9.990a1.54 1.54 0 0 0-1.044-1.263 63 63 0 0 0-2.887-.87C9.843.266 8.69 0 8 0" fill="#1b7a3e"/><path d="M5.6 7.6 L7.3 9.2 L10.4 6.1" fill="none" stroke="#fff" stroke-width="1" stroke-linecap="round" stroke-linejoin="round"/></svg>
<div class="t " style="left:569.50px;top:866.56px;font-size:15.3px;line-height:19.89px;color:#4b5563;clip-path:inset(0 0 0 0);width:28.5px;overflow:hidden;white-space:nowrap;">Web</div>
<div class="badge" style="left:642px;top:866.41px">HTTP Flood</div>
<svg style="position:absolute;left:747px;top:855.01px;overflow:visible" width="100" height="40" viewBox="0 0 100 40"><polygon points="0,40 0,28.2 33.2,0.9 66.6,5.5 100,31.1 100,40" fill="#62a2f5"/><polyline points="0,28.2 33.2,0.9 66.6,5.5 100,31.1" fill="none" stroke="#3a68ee" stroke-width="1" stroke-linejoin="round"/></svg>
<div class="t " style="left:863.50px;top:865.36px;font-size:15px;line-height:19.5px;color:#4b5563;">1</div>
<div class="t " style="left:915.30px;top:854.26px;font-size:15px;line-height:19.5px;color:#4b5563;">55</div>
<div class="t " style="left:915.30px;top:876.36px;font-size:15px;line-height:19.5px;color:#4b5563;">phút</div>
<div class="t " style="left:982.00px;top:854.26px;font-size:15px;line-height:19.5px;color:#4b5563;letter-spacing:0.6px;">2022-09-19</div>
<div class="t " style="left:982.00px;top:876.36px;font-size:15px;line-height:19.5px;color:#4b5563;letter-spacing:0.2px;">15:09:52</div>
<div class="t " style="left:1103.50px;top:854.26px;font-size:15px;line-height:19.5px;color:#4b5563;letter-spacing:0.6px;">2022-09-19</div>
<div class="t " style="left:1103.50px;top:876.36px;font-size:15px;line-height:19.5px;color:#4b5563;letter-spacing:0.2px;">16:04:52</div>
<div style="position:absolute;left:855px;top:907px;width:52px;height:60px;background:#fe5a62"></div>
<div class="t " style="left:274.00px;top:926.19px;font-size:15.5px;line-height:20.15px;color:#0f4cf6;font-weight:700;letter-spacing:0.8px;-webkit-text-stroke:0.3px #0f4cf6;">#2748</div>
<div style="position:absolute;left:338.5px;top:921.1px;width:11px;height:11px;border-radius:50%;background:#1250f2"></div>
<svg style="position:absolute;left:547.2px;top:927.44px" width="18" height="18" viewBox="0 0 16 16"><path d="M8 0c-.69 0-1.843.265-2.928.56-1.11.3-2.229.655-2.887.87a1.54 1.54 0 0 0-1.044 1.262c-.596 4.477.787 7.795 2.465 9.99a11.8 11.8 0 0 0 2.517 2.453c.386.273.744.482 1.048.625.28.132.581.24.829.24s.548-.108.829-.24a7 7 0 0 0 1.048-.625 11.8 11.8 0 0 0 2.517-2.453c1.678-2.195 3.061-5.513 2.465-9.990a1.54 1.54 0 0 0-1.044-1.263 63 63 0 0 0-2.887-.87C9.843.266 8.69 0 8 0" fill="#1b7a3e"/><path d="M5.6 7.6 L7.3 9.2 L10.4 6.1" fill="none" stroke="#fff" stroke-width="1" stroke-linecap="round" stroke-linejoin="round"/></svg>
<div class="t " style="left:569.50px;top:927.89px;font-size:15.3px;line-height:19.89px;color:#4b5563;clip-path:inset(0 0 0 0);width:28.5px;overflow:hidden;white-space:nowrap;">Web</div>
<div class="badge" style="left:642px;top:927.74px">HTTP Flood</div>
<svg style="position:absolute;left:747px;top:916.34px;overflow:visible" width="100" height="40" viewBox="0 0 100 40"><polygon points="0,40 0,23.3 3.4,0.9 7.4,8.2 14.1,33.5 17.2,31.7 23.9,18.1 27.5,17.5 34.1,18.8 40.4,18.2 44.8,14.4 48.4,13.3 55.5,11 59.9,11 65.3,8.6 71.5,8 78.6,5 84.8,5 89.3,2.4 92.8,3 96.4,1.9 100,1.9 100,40" fill="#62a2f5"/><polyline points="0,23.3 3.4,0.9 7.4,8.2 14.1,33.5 17.2,31.7 23.9,18.1 27.5,17.5 34.1,18.8 40.4,18.2 44.8,14.4 48.4,13.3 55.5,11 59.9,11 65.3,8.6 71.5,8 78.6,5 84.8,5 89.3,2.4 92.8,3 96.4,1.9 100,1.9" fill="none" stroke="#3a68ee" stroke-width="1" stroke-linejoin="round"/></svg>
<div class="t " style="left:863.50px;top:926.69px;font-size:15px;line-height:19.5px;color:#4b5563;">912</div>
<div class="t " style="left:915.30px;top:915.59px;font-size:15px;line-height:19.5px;color:#4b5563;">55</div>
<div class="t " style="left:915.30px;top:937.69px;font-size:15px;line-height:19.5px;color:#4b5563;">phút</div>
<div class="t " style="left:982.00px;top:915.59px;font-size:15px;line-height:19.5px;color:#4b5563;letter-spacing:0.6px;">2022-09-19</div>
<div class="t " style="left:982.00px;top:937.69px;font-size:15px;line-height:19.5px;color:#4b5563;letter-spacing:0.2px;">14:25:41</div>
<div class="t " style="left:1103.50px;top:915.59px;font-size:15px;line-height:19.5px;color:#4b5563;letter-spacing:0.6px;">2022-09-19</div>
<div class="t " style="left:1103.50px;top:937.69px;font-size:15px;line-height:19.5px;color:#4b5563;letter-spacing:0.2px;">15:20:41</div>
<div style="position:absolute;left:1236px;top:64px;width:1px;height:909px;background:#e0e1e4"></div>
<div style="position:absolute;left:855px;top:968px;width:52px;height:10px;background:#fde0e3"></div>
<div style="position:absolute;left:348.5px;top:435px;width:179.5px;height:529px;background:radial-gradient(ellipse 70px 22px at 50px 12px,rgba(226,234,251,0.6),rgba(226,234,251,0)),radial-gradient(ellipse 70px 22px at 50px 73px,rgba(226,234,251,0.6),rgba(226,234,251,0)),radial-gradient(ellipse 70px 22px at 50px 135px,rgba(226,234,251,0.6),rgba(226,234,251,0)),radial-gradient(ellipse 70px 22px at 50px 196px,rgba(226,234,251,0.6),rgba(226,234,251,0)),radial-gradient(ellipse 70px 22px at 50px 257px,rgba(226,234,251,0.6),rgba(226,234,251,0)),radial-gradient(ellipse 70px 22px at 50px 319px,rgba(226,234,251,0.6),rgba(226,234,251,0)),radial-gradient(ellipse 70px 22px at 50px 380px,rgba(226,234,251,0.6),rgba(226,234,251,0)),radial-gradient(ellipse 70px 22px at 50px 441px,rgba(226,234,251,0.6),rgba(226,234,251,0)),radial-gradient(ellipse 70px 22px at 50px 503px,rgba(226,234,251,0.6),rgba(226,234,251,0)),linear-gradient(90deg,#ebf0fd 0%,#edf1fd 40%,#f5f7fe 62%,#fbfcfe 80%,#f7f9f9 100%)"></div>
<div style="position:absolute;left:332.5px;top:938px;width:16px;height:26px;background:#eef1fc"></div>
<div style="position:absolute;left:598px;top:433px;width:27px;height:528.5px;background:linear-gradient(90deg,#eef2f3,#edf3f6)"></div>
</body></html>
